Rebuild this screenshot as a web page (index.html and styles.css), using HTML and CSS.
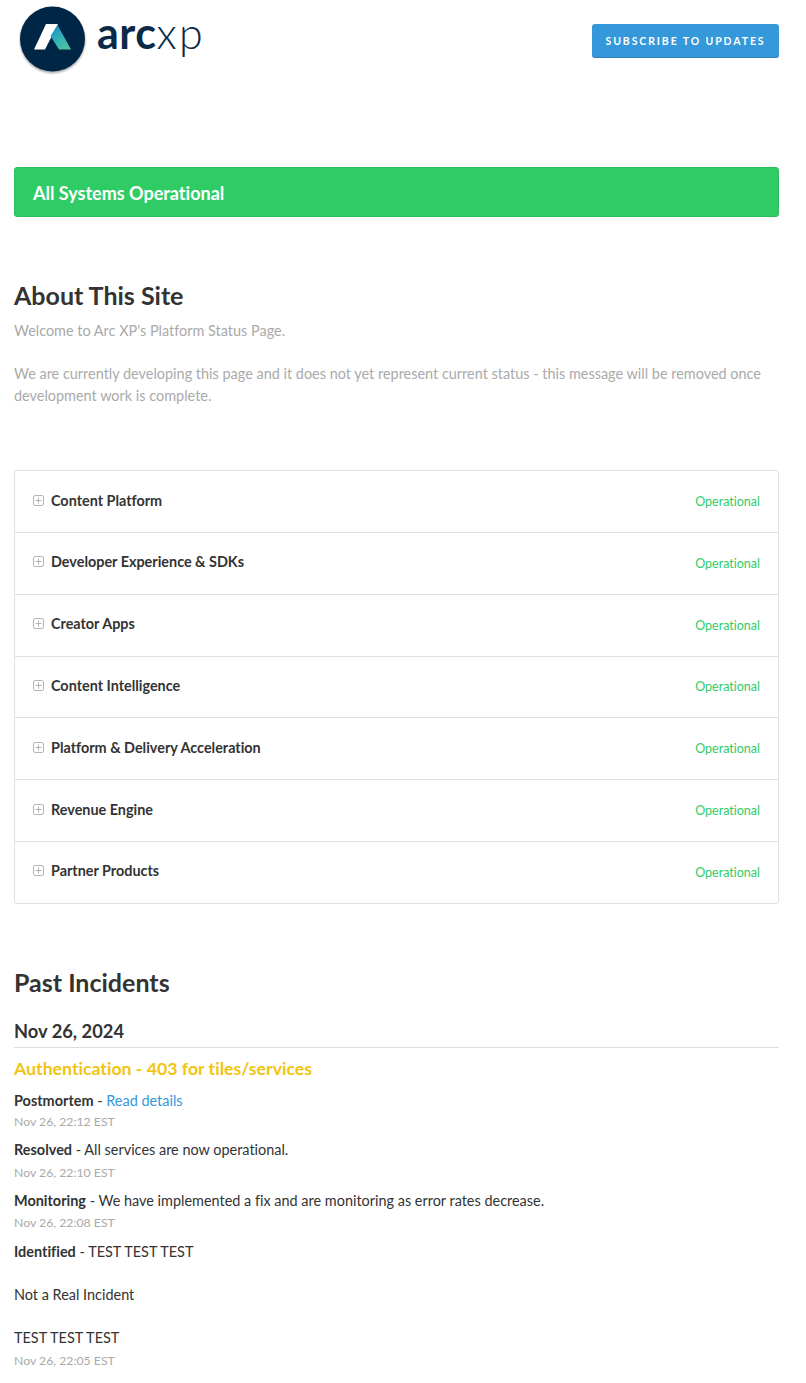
FILE: index.html
```html
<!DOCTYPE html>
<html lang="en">
<head>
<meta charset="utf-8">
<title>Arc XP Status</title>
<link rel="stylesheet" href="styles.css">
</head>
<body>
<div class="page">
  <header class="masthead">
    <a class="logo" href="#">
      <svg class="logo-mark" width="70" height="76" viewBox="0 0 70 76" aria-hidden="true">
        <defs>
          <linearGradient id="arcGrad" x1="0.2" y1="0" x2="0.8" y2="1">
            <stop offset="0" stop-color="#1a8fd0"/>
            <stop offset="0.6" stop-color="#38b5b0"/>
            <stop offset="1" stop-color="#4fc49c"/>
          </linearGradient>
          <filter id="arcShadow" x="-20%" y="-20%" width="140%" height="140%">
            <feDropShadow dx="0" dy="1.5" stdDeviation="1" flood-color="#000" flood-opacity="0.4"/>
          </filter>
        </defs>
        <circle cx="33.5" cy="39" r="32.5" fill="#002545" filter="url(#arcShadow)"/>
        <path d="M15 49.5 L27 24 L39 24 L26 49.5 Z" fill="#fff"/>
        <path d="M38.5 25 L52 49.5 L40 49.5 L31.5 36 Z" fill="url(#arcGrad)"/>
      </svg>
      <span class="wordmark"><b class="wordmark-bold">arc</b><span class="wordmark-light">xp</span></span>
    </a>
    <button class="subscribe" type="button">Subscribe to updates</button>
  </header>

  <div class="status-banner">All Systems Operational</div>

  <section class="about">
    <h2 class="section-title">About This Site</h2>
    <p class="about-text">Welcome to Arc XP's Platform Status Page.</p>
    <p class="about-text">We are currently developing this page and it does not yet represent current status - this message will be removed once development work is complete.</p>
  </section>

  <section class="components">
    <div class="component"><span class="component-name"><svg class="plus" width="11" height="11" viewBox="0 0 11 11"><rect x="0.5" y="0.5" width="10" height="10" rx="1.5"/><path d="M5.5 2.5v6M2.5 5.5h6"/></svg>Content Platform</span><span class="component-status">Operational</span></div>
    <div class="component"><span class="component-name"><svg class="plus" width="11" height="11" viewBox="0 0 11 11"><rect x="0.5" y="0.5" width="10" height="10" rx="1.5"/><path d="M5.5 2.5v6M2.5 5.5h6"/></svg>Developer Experience &amp; SDKs</span><span class="component-status">Operational</span></div>
    <div class="component"><span class="component-name"><svg class="plus" width="11" height="11" viewBox="0 0 11 11"><rect x="0.5" y="0.5" width="10" height="10" rx="1.5"/><path d="M5.5 2.5v6M2.5 5.5h6"/></svg>Creator Apps</span><span class="component-status">Operational</span></div>
    <div class="component"><span class="component-name"><svg class="plus" width="11" height="11" viewBox="0 0 11 11"><rect x="0.5" y="0.5" width="10" height="10" rx="1.5"/><path d="M5.5 2.5v6M2.5 5.5h6"/></svg>Content Intelligence</span><span class="component-status">Operational</span></div>
    <div class="component"><span class="component-name"><svg class="plus" width="11" height="11" viewBox="0 0 11 11"><rect x="0.5" y="0.5" width="10" height="10" rx="1.5"/><path d="M5.5 2.5v6M2.5 5.5h6"/></svg>Platform &amp; Delivery Acceleration</span><span class="component-status">Operational</span></div>
    <div class="component"><span class="component-name"><svg class="plus" width="11" height="11" viewBox="0 0 11 11"><rect x="0.5" y="0.5" width="10" height="10" rx="1.5"/><path d="M5.5 2.5v6M2.5 5.5h6"/></svg>Revenue Engine</span><span class="component-status">Operational</span></div>
    <div class="component"><span class="component-name"><svg class="plus" width="11" height="11" viewBox="0 0 11 11"><rect x="0.5" y="0.5" width="10" height="10" rx="1.5"/><path d="M5.5 2.5v6M2.5 5.5h6"/></svg>Partner Products</span><span class="component-status">Operational</span></div>
  </section>

  <section class="incidents">
    <h2 class="section-title">Past Incidents</h2>
    <h4 class="incident-date">Nov 26, 2024</h4>
    <h3 class="incident-title"><a href="#">Authentication - 403 for tiles/services</a></h3>
    <div class="update">
      <p class="update-body"><strong>Postmortem</strong> - <a href="#">Read details</a></p>
      <small class="update-time">Nov 26, 22:12 EST</small>
    </div>
    <div class="update">
      <p class="update-body"><strong>Resolved</strong> - All services are now operational.</p>
      <small class="update-time">Nov 26, 22:10 EST</small>
    </div>
    <div class="update">
      <p class="update-body"><strong>Monitoring</strong> - We have implemented a fix and are monitoring as error rates decrease.</p>
      <small class="update-time">Nov 26, 22:08 EST</small>
    </div>
    <div class="update update-last">
      <p class="update-body"><strong>Identified</strong> - TEST TEST TEST<br><br>Not a Real Incident<br><br>TEST TEST TEST</p>
      <small class="update-time">Nov 26, 22:05 EST</small>
    </div>
  </section>
</div>
</body>
</html>
```
FILE: styles.css
```css
* { box-sizing: border-box; }
html, body { margin: 0; padding: 0; background: #fff; }
body {
  font-family: "Lato", "Liberation Sans", sans-serif;
  font-variant-ligatures: none;
  color: #333;
  font-size: 14.4px;
  overflow: hidden;
}
.page { padding: 0 27px 0 14px; width: 806px; height: 1383px; overflow: hidden; }
.page a { text-decoration: none; }

.masthead { display: flex; justify-content: space-between; align-items: flex-start; height: 167px; }
.logo { display: flex; align-items: flex-start; margin-left: 5px; }
.logo-mark { display: block; }
.wordmark { margin: 8px 0 0 8px; font-size: 43px; line-height: 50px; color: #0b2a47; letter-spacing: 0.5px; }
.wordmark-bold { font-weight: 700; }
.wordmark-light { font-weight: 300; letter-spacing: 2.4px; }
.subscribe {
  margin-top: 24px; width: 187px; height: 34px; padding: 0;
  background: #3498db; color: #fff; border: 0; border-bottom: 1px solid #2f80b8; border-radius: 3px;
  font: 700 10.5px "Lato", sans-serif; letter-spacing: 1.9px; text-transform: uppercase;
}

.status-banner {
  height: 50px; line-height: 50px; padding-left: 18px;
  background: #2fcc66; border: 1px solid #2bbd5e; border-radius: 3px;
  color: #fff; font-size: 18px; font-weight: 700;
}

.about { margin-top: 63px; }
.section-title { margin: 0; font-size: 25px; line-height: 30px; font-weight: 700; color: #333; }
.about-text { margin: 0 0 21px; color: #aaa; font-size: 14.45px; line-height: 22px; }
.section-title + .about-text { margin-top: 10px; }

.components { margin-top: 63px; border: 1px solid #e0e0e0; border-radius: 3px; }
.component { display: flex; justify-content: space-between; align-items: center; height: 61.8px; padding: 0 18px; border-top: 1px solid #e0e0e0; }
.component:first-child { border-top: 0; height: 61px; }
.component-name { display: flex; align-items: center; padding-bottom: 3px; font-size: 14.4px; font-weight: 700; color: #333; }
.plus { margin-right: 7px; fill: none; stroke: #b5b5b5; stroke-width: 1; }
.component-status { color: #2fcc66; font-size: 12.5px; }

.incidents { margin-top: 63px; }
.incident-date { margin: 22px 0 0; padding-bottom: 4px; border-bottom: 1px solid #ddd; font-size: 18.3px; line-height: 24px; font-weight: 700; color: #333; }
.incident-title { margin: 9px 0 0; font-size: 17.7px; line-height: 24px; font-weight: 700; }
.incident-title a { color: #f1c40f; }
.update { margin-top: 8px; }
.incident-title + .update { margin-top: 9px; }
.incident-title + .update .update-time { margin-top: 1px; }
.update-last { margin-top: 9px; }
.update-body { margin: 0; font-size: 14.44px; line-height: 21.5px; color: #333; }
.update-body a { color: #3498db; }
.update-time { display: block; margin-top: 2px; font-size: 12.25px; line-height: 19px; color: #aaa; }
```
